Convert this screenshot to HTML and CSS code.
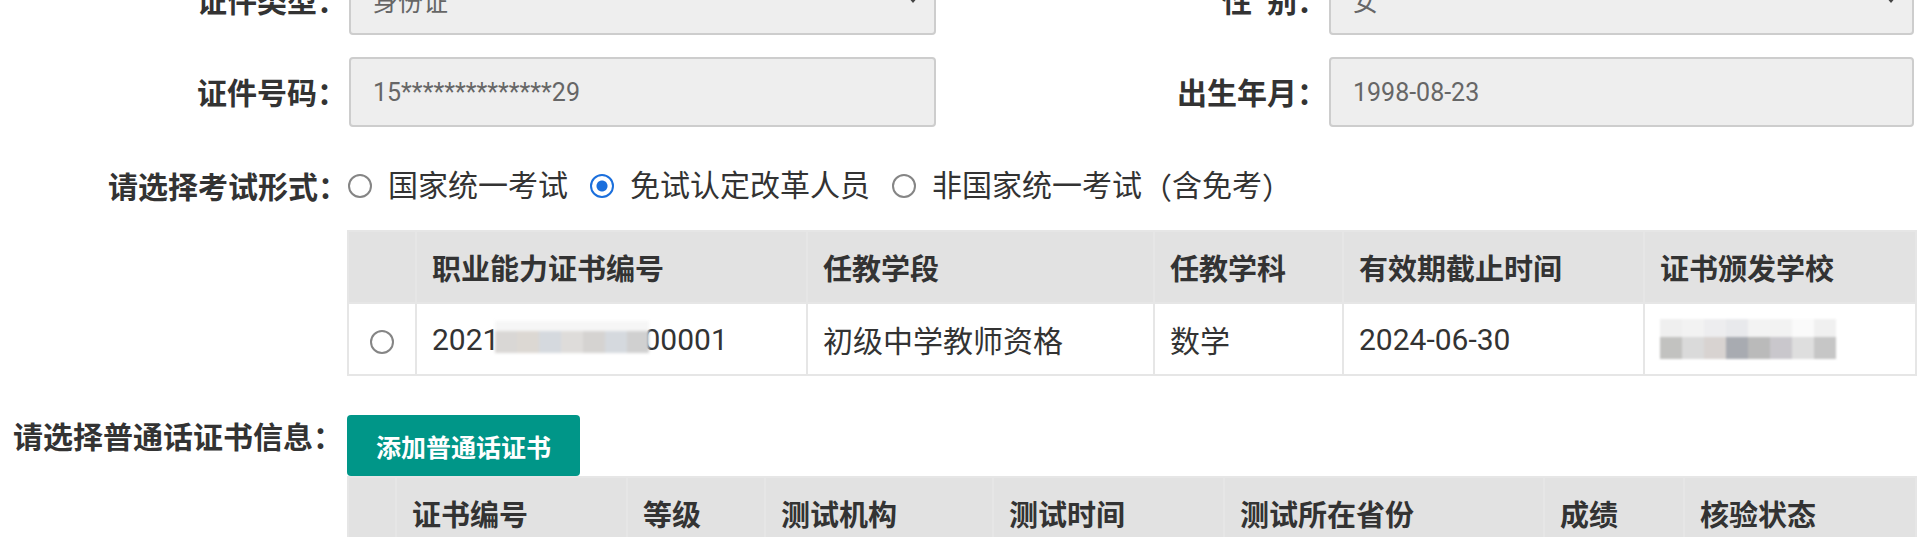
FILE: index.html
```html
<!DOCTYPE html>
<html lang="zh-CN">
<head>
    <meta charset="UTF-8">
    <meta name="viewport" content="width=device-width, initial-scale=1.0">
    <title>报名信息</title>
    <link rel="stylesheet" href="styles.css">
</head>
<body>
    <div class="page">
        <div class="form-grid">
            <label class="label">证件类型<span class="punct">：</span></label>
            <div class="field">
                <span>身份证</span>
                <i class="caret"></i>
            </div>
            <label class="label">性&nbsp;&nbsp;别<span class="punct">：</span></label>
            <div class="field">
                <span>女</span>
                <i class="caret"></i>
            </div>

            <label class="label">证件号码<span class="punct">：</span></label>
            <div class="field">15**************29</div>
            <label class="label">出生年月<span class="punct">：</span></label>
            <div class="field">1998-08-23</div>
        </div>

        <div class="exam-row">
            <span class="label">请选择考试形式<span class="punct">：</span></span>
            <label class="option"><input type="radio" class="radio" name="exam">国家统一考试</label>
            <label class="option"><input type="radio" class="radio" name="exam" checked>免试认定改革人员</label>
            <label class="option"><input type="radio" class="radio" name="exam">非国家统一考试<span class="punct">（</span>含免考<span class="punct">）</span></label>
        </div>

        <div class="cert-block">
            <table class="grid cert-table">
                <colgroup>
                    <col><col><col><col><col><col>
                </colgroup>
                <thead>
                    <tr>
                        <th></th>
                        <th>职业能力证书编号</th>
                        <th>任教学段</th>
                        <th>任教学科</th>
                        <th>有效期截止时间</th>
                        <th>证书颁发学校</th>
                    </tr>
                </thead>
                <tbody>
                    <tr>
                        <td class="pick"><input type="radio" class="radio" name="cert"></td>
                        <td>2021<span class="mosaic mosaic-num"><b></b><b></b><b></b><b></b><b></b><b></b><b></b></span>00001</td>
                        <td>初级中学教师资格</td>
                        <td>数学</td>
                        <td>2024-06-30</td>
                        <td>
                            <span class="mosaic mosaic-school">
                                <span class="mosaic-top"><b></b><b></b><b></b><b></b><b></b><b></b><b></b><b></b></span>
                                <span class="mosaic-bottom"><b></b><b></b><b></b><b></b><b></b><b></b><b></b><b></b></span>
                            </span>
                        </td>
                    </tr>
                </tbody>
            </table>
        </div>

        <div class="mandarin-row">
            <span class="label">请选择普通话证书信息<span class="punct">：</span></span>
            <div class="mandarin-body">
                <button class="btn">添加普通话证书</button>
                <table class="grid mandarin-table">
                    <colgroup>
                        <col><col><col><col><col><col><col><col>
                    </colgroup>
                    <thead>
                        <tr>
                            <th></th>
                            <th>证书编号</th>
                            <th>等级</th>
                            <th>测试机构</th>
                            <th>测试时间</th>
                            <th>测试所在省份</th>
                            <th>成绩</th>
                            <th>核验状态</th>
                        </tr>
                    </thead>
                </table>
            </div>
        </div>
    </div>
</body>
</html>
```

FILE: styles.css
```css
body {
    margin: 0;
    background: #fff;
    font-family: Roboto, "Noto Sans CJK SC", sans-serif;
    color: #333;
}
.page {
    margin-top: -35px;
}
/* centred full-width punctuation, as the original font draws it */
.punct {
    font-family: "Noto Sans CJK TC", "Noto Sans CJK SC", sans-serif;
}
.label {
    font-size: 30px;
    font-weight: bold;
    line-height: 40px;
    color: #333;
    text-align: right;
    white-space: nowrap;
}
.form-grid {
    display: grid;
    grid-template-columns: 349px 587px 393px 585px;
    grid-auto-rows: 70px;
    row-gap: 22px;
    align-items: center;
}
.form-grid .label {
    padding-right: 2px;
}
.field {
    box-sizing: border-box;
    height: 70px;
    display: flex;
    align-items: center;
    justify-content: space-between;
    padding: 0 16px 0 22px;
    background: #eee;
    border: 2px solid #cdcdcd;
    border-radius: 4px;
    font-size: 25px;
    color: #666;
}
.caret {
    width: 0;
    height: 0;
    border-left: 5px solid transparent;
    border-right: 5px solid transparent;
    border-top: 6px solid #444;
}
.exam-row {
    display: flex;
    align-items: center;
    height: 40px;
    margin-top: 39px;
}
.exam-row .label {
    width: 348px;
}
.option {
    display: flex;
    align-items: center;
    font-size: 30px;
    line-height: 40px;
    color: #333;
    margin-right: 22px;
}
.radio {
    appearance: none;
    box-sizing: border-box;
    width: 24px;
    height: 24px;
    margin: 0 16px 0 0;
    border: 2px solid #858585;
    border-radius: 50%;
    background: #fff;
}
.radio:checked {
    border-color: #1b6fdc;
    background: radial-gradient(circle, #1b6fdc 0 5px, #fff 6px);
}
.cert-block {
    margin: 24px 0 0 347px;
}
.grid {
    width: 1568px;
    table-layout: fixed;
    border-collapse: collapse;
}
.grid th,
.grid td {
    height: 70px;
    padding: 0 15px;
    border: 2px solid #e6e6e6;
    text-align: left;
    white-space: nowrap;
    overflow: hidden;
}
.grid th {
    background: #e2e2e2;
    font-size: 29px;
    font-weight: bold;
    color: #333;
}
.grid td {
    font-size: 30px;
    color: #333;
}
.grid td.pick {
    padding: 0;
    text-align: center;
}
.pick .radio {
    margin: 0;
    vertical-align: middle;
}
.cert-table col:nth-child(1) { width: 68px; }
.cert-table col:nth-child(2) { width: 391px; }
.cert-table col:nth-child(3) { width: 347px; }
.cert-table col:nth-child(4) { width: 189px; }
.cert-table col:nth-child(5) { width: 301px; }
.cert-table col:nth-child(6) { width: 272px; }

.mosaic b {
    display: inline-block;
    width: 22px;
}
.mosaic-num {
    position: relative;
    display: inline-flex;
    vertical-align: middle;
    margin: 0 -6px 0 -4px;
    height: 22px;
    filter: blur(1.5px);
    box-shadow: 0 -10px 0 #f6f6f6;
}
.mosaic-num b:nth-child(1) { background: #d9d7d5; }
.mosaic-num b:nth-child(2) { background: #dcd8d3; }
.mosaic-num b:nth-child(3) { background: #d5d9de; }
.mosaic-num b:nth-child(4) { background: #dedcda; }
.mosaic-num b:nth-child(5) { background: #d5d3d1; }
.mosaic-num b:nth-child(6) { background: #d5d9de; }
.mosaic-num b:nth-child(7) { background: #d0d0d0; }

.mosaic-school {
    display: inline-flex;
    flex-direction: column;
    vertical-align: middle;
    filter: blur(1.2px);
}
.mosaic-top,
.mosaic-bottom {
    display: flex;
}
.mosaic-top b { height: 18px; }
.mosaic-bottom b { height: 22px; }
.mosaic-top b:nth-child(1) { background: #efefef; }
.mosaic-top b:nth-child(2) { background: #f2f2f2; }
.mosaic-top b:nth-child(3) { background: #ededef; }
.mosaic-top b:nth-child(4) { background: #e8e9ec; }
.mosaic-top b:nth-child(5) { background: #f3f3f3; }
.mosaic-top b:nth-child(6) { background: #f2f2f2; }
.mosaic-top b:nth-child(7) { background: #fafafa; }
.mosaic-top b:nth-child(8) { background: #f0f0f0; }
.mosaic-bottom b:nth-child(1) { background: #c2c2c0; }
.mosaic-bottom b:nth-child(2) { background: #dadada; }
.mosaic-bottom b:nth-child(3) { background: #d8d3d1; }
.mosaic-bottom b:nth-child(4) { background: #a8abb1; }
.mosaic-bottom b:nth-child(5) { background: #bababa; }
.mosaic-bottom b:nth-child(6) { background: #c9c7cc; }
.mosaic-bottom b:nth-child(7) { background: #dedede; }
.mosaic-bottom b:nth-child(8) { background: #c6c6c6; }

.mandarin-row {
    display: flex;
    align-items: flex-start;
    margin-top: 39px;
}
.mandarin-row .label {
    width: 343px;
    padding-right: 4px;
}
.btn {
    display: block;
    width: 233px;
    height: 61px;
    padding: 0;
    border: none;
    border-radius: 4px;
    background: #009688;
    color: #fff;
    font-family: inherit;
    font-size: 25px;
    font-weight: bold;
    cursor: pointer;
}
.mandarin-table col:nth-child(1) { width: 48px; }
.mandarin-table col:nth-child(2) { width: 231px; }
.mandarin-table col:nth-child(3) { width: 138px; }
.mandarin-table col:nth-child(4) { width: 228px; }
.mandarin-table col:nth-child(5) { width: 231px; }
.mandarin-table col:nth-child(6) { width: 320px; }
.mandarin-table col:nth-child(7) { width: 140px; }
.mandarin-table col:nth-child(8) { width: 232px; }
```
